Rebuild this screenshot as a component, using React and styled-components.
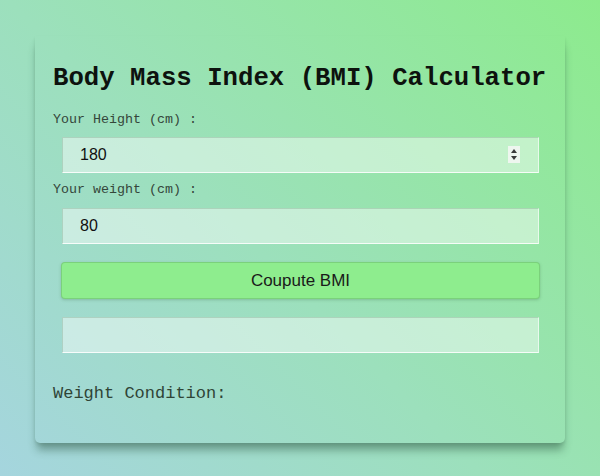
import React from "react";
import styled, { createGlobalStyle } from "styled-components";

const GlobalStyle = createGlobalStyle`
  html, body {
    margin: 0;
    padding: 0;
  }
  body {
    width: 600px;
    height: 476px;
    overflow: hidden;
    background: linear-gradient(45deg, #a5d5de 0%, #9ce0bc 45%, #8deb8d 100%);
    font-family: "Liberation Mono", "Courier New", monospace;
  }
`;

const Card = styled.div`
  box-sizing: border-box;
  width: 530px;
  height: 407px;
  margin: 36px 0 0 35px;
  padding: 28px 18px 0;
  border-radius: 0 0 5px 5px;
  box-shadow: 0 9px 8px -2px rgba(40, 80, 60, 0.45), 0 2px 3px rgba(40, 80, 60, 0.12);
`;

const Title = styled.h1`
  margin: 0 0 18px;
  font-family: "Liberation Mono", "Courier New", monospace;
  font-size: 25.7px;
  font-weight: 700;
  line-height: 30px;
  color: #0d120e;
  white-space: nowrap;
`;

const Label = styled.label`
  display: block;
  font-size: 13.33px;
  line-height: 16px;
  color: #34463a;
  margin: ${(p) => (p.first ? "0 0 9px" : "9px 0 10px")};
`;

const Field = styled.div`
  position: relative;
  width: 477px;
  margin-left: 9px;
`;

const Input = styled.input`
  box-sizing: border-box;
  display: block;
  width: 100%;
  height: 36px;
  padding: 0 17px;
  border: 1px solid;
  border-color: rgba(120, 160, 130, 0.35) rgba(255, 255, 255, 0.6) rgba(255, 255, 255, 0.85) rgba(120, 160, 130, 0.35);
  background: rgba(255, 255, 255, 0.45);
  font-family: "Liberation Sans", Arial, sans-serif;
  font-size: 16px;
  color: #111;
  outline: none;
  -moz-appearance: textfield;
  &::-webkit-inner-spin-button,
  &::-webkit-outer-spin-button {
    -webkit-appearance: none;
    margin: 0;
  }
`;

const Spinner = styled.span`
  position: absolute;
  right: 19px;
  top: 9px;
  width: 12px;
  height: 17px;
  background: #eef6ef;
  display: flex;
  flex-direction: column;
  align-items: center;
  justify-content: center;
  gap: 3px;
`;

const Arrow = styled.span`
  width: 0;
  height: 0;
  border-left: 3px solid transparent;
  border-right: 3px solid transparent;
  ${(p) => (p.up ? "border-bottom: 4px solid #3a3a3a;" : "border-top: 4px solid #3a3a3a;")}
`;

const Button = styled.button`
  box-sizing: border-box;
  display: block;
  width: 479px;
  height: 37px;
  margin: 18px 0 18px 8px;
  border: 1px solid rgba(110, 190, 110, 0.6);
  border-radius: 4px;
  background: #8eed8e;
  box-shadow: 0 1px 3px rgba(60, 110, 70, 0.3);
  font-family: "Liberation Sans", Arial, sans-serif;
  font-size: 17px;
  color: #1a1a1a;
`;

const Condition = styled.p`
  margin: 31px 0 0;
  font-size: 17px;
  line-height: 20px;
  color: #2f4436;
`;

export default function App() {
  return (
    <>
      <GlobalStyle />
      <Card>
        <Title>Body Mass Index (BMI) Calculator</Title>
        <Label first>Your Height (cm) :</Label>
        <Field>
          <Input type="number" defaultValue="180" />
          <Spinner>
            <Arrow up />
            <Arrow />
          </Spinner>
        </Field>
        <Label>Your weight (cm) :</Label>
        <Field>
          <Input type="number" defaultValue="80" />
        </Field>
        <Button>Coupute BMI</Button>
        <Field>
          <Input type="text" readOnly />
        </Field>
        <Condition>Weight Condition:</Condition>
      </Card>
    </>
  );
}
